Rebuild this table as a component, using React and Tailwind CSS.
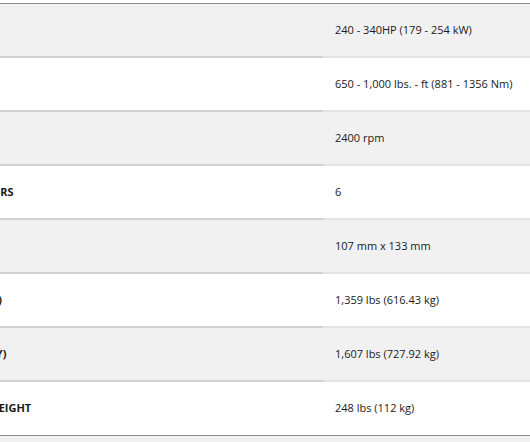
export default function App() {
  const rows = [
    ["POWER", "240 - 340HP (179 - 254 kW)", true],
    ["TORQUE", "650 - 1,000 lbs. - ft (881 - 1356 Nm)", false],
    ["RATED SPEED", "2400 rpm", true],
    ["NUM. OF CYLINDERS", "6", false],
    ["BORE X STROKE", "107 mm x 133 mm", true],
    ["NET WEIGHT (DRY)", "1,359 lbs (616.43 kg)", false],
    ["NET WEIGHT (ASSY)", "1,607 lbs (727.92 kg)", true],
    ["SYSTEM FLUIDS WEIGHT", "248 lbs (112 kg)", false],
  ];
  return (
    <div className="w-[530px] h-[442px] overflow-hidden bg-white text-[11px] text-[#1a1a1a]" style={{ fontFamily: '"Open Sans", "Noto Sans", sans-serif' }}>
      <div className="h-[3px] bg-white" />
      <div className="border-t border-[#8c8c8c]">
        {rows.map(([label, value, gray], i) => (
          <div
            key={i}
            className={`grid grid-cols-[323px_1fr] h-[54px] ${i === rows.length - 1 ? "border-b border-[#8c8c8c]" : ""} ${gray ? "bg-[#f1f1f1]" : "bg-white"}`}
          >
            <div className={`relative overflow-hidden flex items-center ${i === rows.length - 1 ? "" : "border-b-2 border-[#d2d2d2]"}`}>
              <span className="absolute left-[-98px] whitespace-nowrap font-bold">{label}</span>
            </div>
            <div className={`flex items-center pl-[12px] ${i === rows.length - 1 ? "" : "border-b-2 border-[#e4e4e4]"}`}>
              {value}
            </div>
          </div>
        ))}
        <div className="h-[20px] bg-[#f1f1f1]" />
      </div>
    </div>
  );
}
